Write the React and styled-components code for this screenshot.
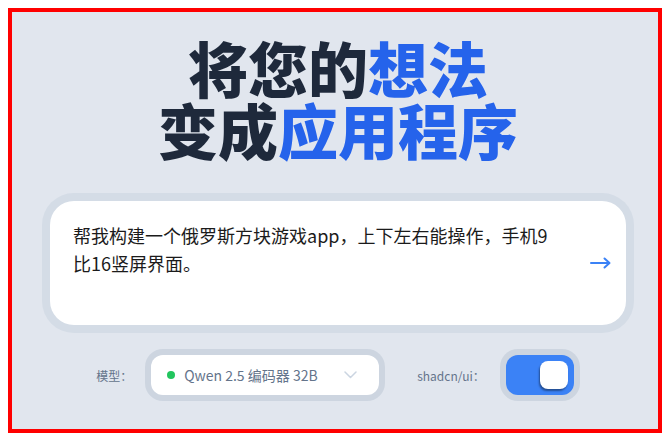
import React from "react";
import styled, { createGlobalStyle } from "styled-components";

const Global = createGlobalStyle`
  html, body { margin: 0; padding: 0; background: #ffffff; }
  body { margin: 8px; font-family: "Noto Sans CJK SC", "Noto Sans", sans-serif; }
  * { box-sizing: border-box; }
`;

const Frame = styled.div`
  height: 425px;
  border: 4px solid #ff0000;
  background: #e1e6ee;
  box-shadow: 3px 3px 4px rgba(0, 0, 0, 0.35);
  display: flex;
  flex-direction: column;
  align-items: center;
  padding: 24px 0 28px 6px;
`;

const Title = styled.h1`
  margin: 0;
  font-family: "Noto Sans CJK SC", sans-serif;
  font-weight: 900;
  font-size: 60px;
  line-height: 62px;
  text-align: center;
  color: #1e293b;
`;

const Accent = styled.span`
  color: #2563eb;
`;

const Ring = styled.div`
  padding: ${(p) => p.$pad || 6}px;
  border-radius: ${(p) => p.$radius}px;
  background: ${(p) => p.$color || "#cbd4df"};
`;

const PromptRing = styled(Ring)`
  margin-top: 33px;
  width: 592px;
`;

const PromptBox = styled.div`
  height: 124px;
  background: #ffffff;
  border-radius: 24px;
  display: flex;
  align-items: center;
  padding: 0 15px 0 23px;
`;

const PromptText = styled.div`
  align-self: flex-start;
  width: 482px;
  padding-top: 20px;
  font-size: 18px;
  line-height: 28px;
  color: #1b1b1b;
`;

const SendButton = styled.button`
  margin-left: auto;
  width: 24px;
  height: 24px;
  border: none;
  background: transparent;
  padding: 0;
  display: flex;
  align-items: center;
  justify-content: flex-end;
  cursor: pointer;
`;

const Controls = styled.div`
  margin-top: 16px;
  display: flex;
  align-items: center;
  gap: 32px;
`;

const Field = styled.div`
  display: flex;
  align-items: center;
  gap: ${(p) => p.$gap}px;
`;

const Label = styled.span`
  font-size: 12px;
  color: #64748b;
  white-space: nowrap;
`;

const SelectBox = styled.div`
  width: 228px;
  height: 40px;
  background: #ffffff;
  border-radius: 12px;
  display: flex;
  align-items: center;
  padding: 0 22px 0 16px;
`;

const Dot = styled.span`
  width: 8px;
  height: 8px;
  border-radius: 50%;
  background: #22c55e;
  margin-right: 9px;
  flex: none;
`;

const SelectText = styled.span`
  font-size: 14px;
  color: #64748b;
  white-space: nowrap;
`;

const Chevron = styled.svg`
  margin-left: auto;
`;

const Switch = styled.div`
  width: 68px;
  height: 40px;
  border-radius: 12px;
  background: #3b82f6;
  display: flex;
  align-items: center;
  justify-content: ${(p) => (p.$on ? "flex-end" : "flex-start")};
  padding: 0 6px;
`;

const Knob = styled.span`
  width: 28px;
  height: 28px;
  border-radius: 8px;
  background: #ffffff;
  box-shadow: -1px 2px 2px rgba(0, 0, 0, 0.4);
`;

export default function App() {
  return (
    <>
      <Global />
      <Frame>
        <Title>
          将您的<Accent>想法</Accent>
          <br />
          变成<Accent>应用程序</Accent>
        </Title>
        <PromptRing $pad={8} $radius={32} $color="#d4dce6">
          <PromptBox>
            <PromptText>
              帮我构建一个俄罗斯方块游戏app，上下左右能操作，手机9比16竖屏界面。
            </PromptText>
            <SendButton aria-label="发送">
              <svg width="21" height="12" viewBox="0 0 21 12" fill="none">
                <path d="M1 6 H19" stroke="#3b82f6" strokeWidth="2" strokeLinecap="round" />
                <path d="M14.5 1.5 L19.5 6 L14.5 10.5" stroke="#3b82f6" strokeWidth="2" strokeLinecap="round" strokeLinejoin="round" />
              </svg>
            </SendButton>
          </PromptBox>
        </PromptRing>
        <Controls>
          <Field $gap={13}>
            <Label>模型：</Label>
            <Ring $pad={6} $radius={18} $color="#cdd5e0">
              <SelectBox>
                <Dot />
                <SelectText>Qwen 2.5 编码器 32B</SelectText>
                <Chevron width="13" height="8" viewBox="0 0 13 8" fill="none">
                  <path d="M1 1 L6.5 6.5 L12 1" stroke="#cbd5e1" strokeWidth="1.5" strokeLinecap="round" strokeLinejoin="round" />
                </Chevron>
              </SelectBox>
            </Ring>
          </Field>
          <Field $gap={15}>
            <Label>shadcn/ui：</Label>
            <Ring $pad={6} $radius={18} $color="#cdd5e0">
              <Switch $on>
                <Knob />
              </Switch>
            </Ring>
          </Field>
        </Controls>
      </Frame>
    </>
  );
}
